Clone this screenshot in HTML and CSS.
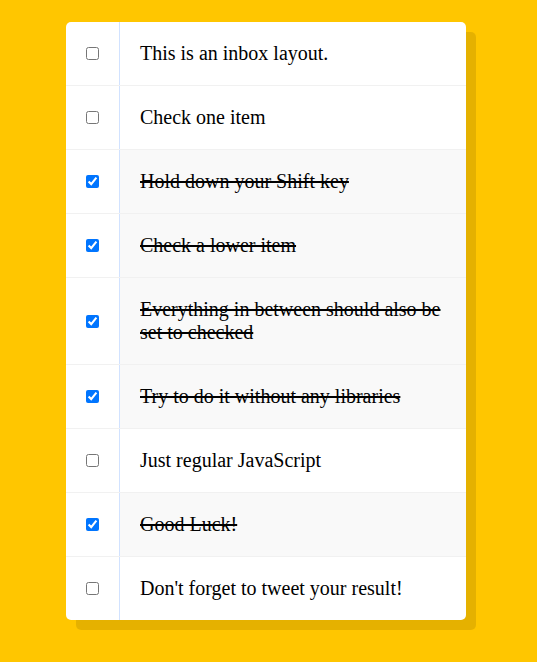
FILE: index.html
```html
<!DOCTYPE html>
<html lang="en">
<head>
<meta charset="UTF-8">
<title>Hold Shift to Check Multiple Checkboxes!</title>
<link rel="stylesheet" href="styles.css">
</head>
<body>
  <div class="inbox">
    <div class="item">
      <input type="checkbox">
      <p>This is an inbox layout.</p>
    </div>
    <div class="item">
      <input type="checkbox">
      <p>Check one item</p>
    </div>
    <div class="item">
      <input type="checkbox" checked>
      <p>Hold down your Shift key</p>
    </div>
    <div class="item">
      <input type="checkbox" checked>
      <p>Check a lower item</p>
    </div>
    <div class="item">
      <input type="checkbox" checked>
      <p>Everything in between should also be set to checked</p>
    </div>
    <div class="item">
      <input type="checkbox" checked>
      <p>Try to do it without any libraries</p>
    </div>
    <div class="item">
      <input type="checkbox">
      <p>Just regular JavaScript</p>
    </div>
    <div class="item">
      <input type="checkbox" checked>
      <p>Good Luck!</p>
    </div>
    <div class="item">
      <input type="checkbox">
      <p>Don't forget to tweet your result!</p>
    </div>
  </div>
</body>
</html>
```

FILE: styles.css
```css
html {
  font-family: "Liberation Serif", serif;
  background: #ffc600;
}
body {
  margin: 0;
  padding: 22px 0 30px 66px;
}
.inbox {
  width: 400px;
  background: white;
  border-radius: 5px;
  box-shadow: 10px 10px 0 rgba(0, 0, 0, 0.1);
}
.item {
  display: flex;
  align-items: center;
  border-bottom: 1px solid #f1f1f1;
}
.item:last-child {
  border-bottom: 0;
}
.item input[type="checkbox"] {
  margin: 20px;
}
.item p {
  margin: 0;
  padding: 20px;
  flex: 1;
  font-family: "Liberation Serif", serif;
  font-size: 20px;
  font-weight: 200;
  border-left: 1px solid #d1e2ff;
}
.item input:checked + p {
  background: #f9f9f9;
  text-decoration: line-through;
}
```
